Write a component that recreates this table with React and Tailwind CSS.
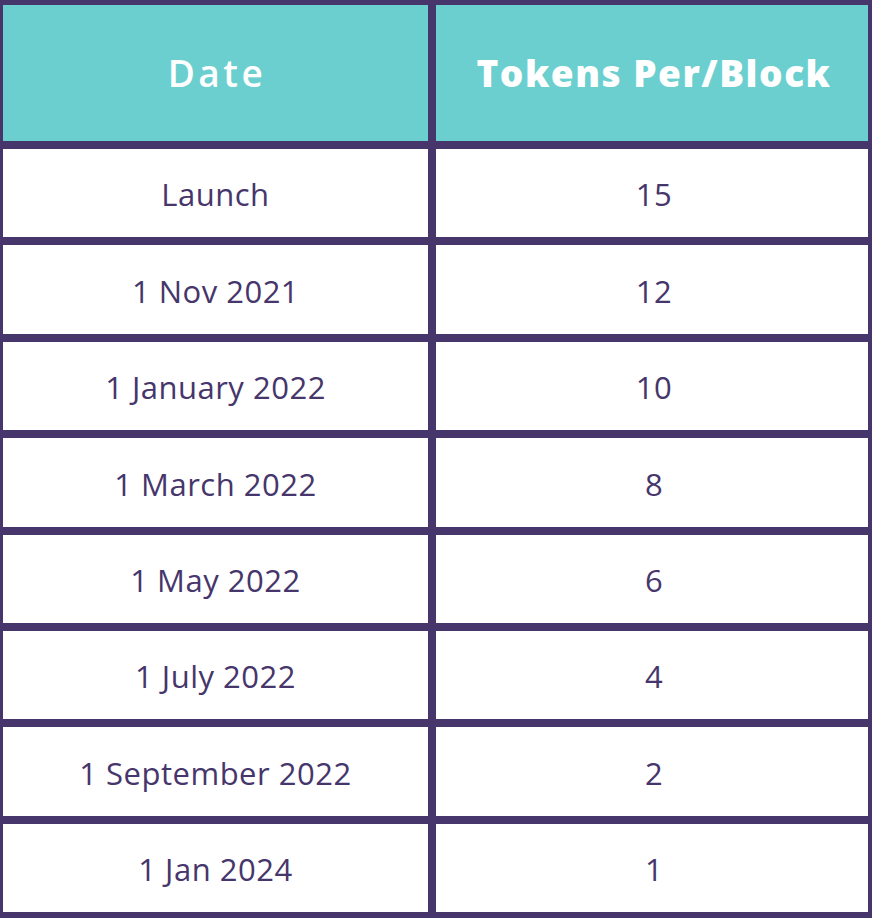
const rows = [
  ['Launch', '15'],
  ['1 Nov 2021', '12'],
  ['1 January 2022', '10'],
  ['1 March 2022', '8'],
  ['1 May 2022', '6'],
  ['1 July 2022', '4'],
  ['1 September 2022', '2'],
  ['1 Jan 2024', '1'],
];

export default function App() {
  return (
    <div
      className="w-[872px] h-[918px] bg-[#46366b] pt-[5px] pl-[3px] pr-[4px] pb-[6px] grid grid-cols-[425px_1fr] grid-rows-[136px_repeat(8,1fr)] gap-[8px]"
      style={{ fontFamily: '"Open Sans", "Noto Sans", sans-serif' }}
    >
      <div className="bg-[#6bcfcf] flex items-center justify-center text-white text-[37px] font-semibold tracking-[3.5px] pl-[3px]">
        Date
      </div>
      <div className="bg-[#6bcfcf] flex items-center justify-center text-white text-[37px] font-extrabold tracking-[1.5px] pl-[4px]">
        Tokens Per/Block
      </div>
      {rows.map(([date, tokens]) => (
        <>
          <div key={date} className="bg-white flex items-center justify-center text-[#46366b] text-[31px] tracking-[0.5px] pt-[3px]">
            {date}
          </div>
          <div key={date + '-t'} className="bg-white flex items-center justify-center text-[#46366b] text-[31px] tracking-[0.5px] pt-[3px] pl-[4px]">
            {tokens}
          </div>
        </>
      ))}
    </div>
  );
}
